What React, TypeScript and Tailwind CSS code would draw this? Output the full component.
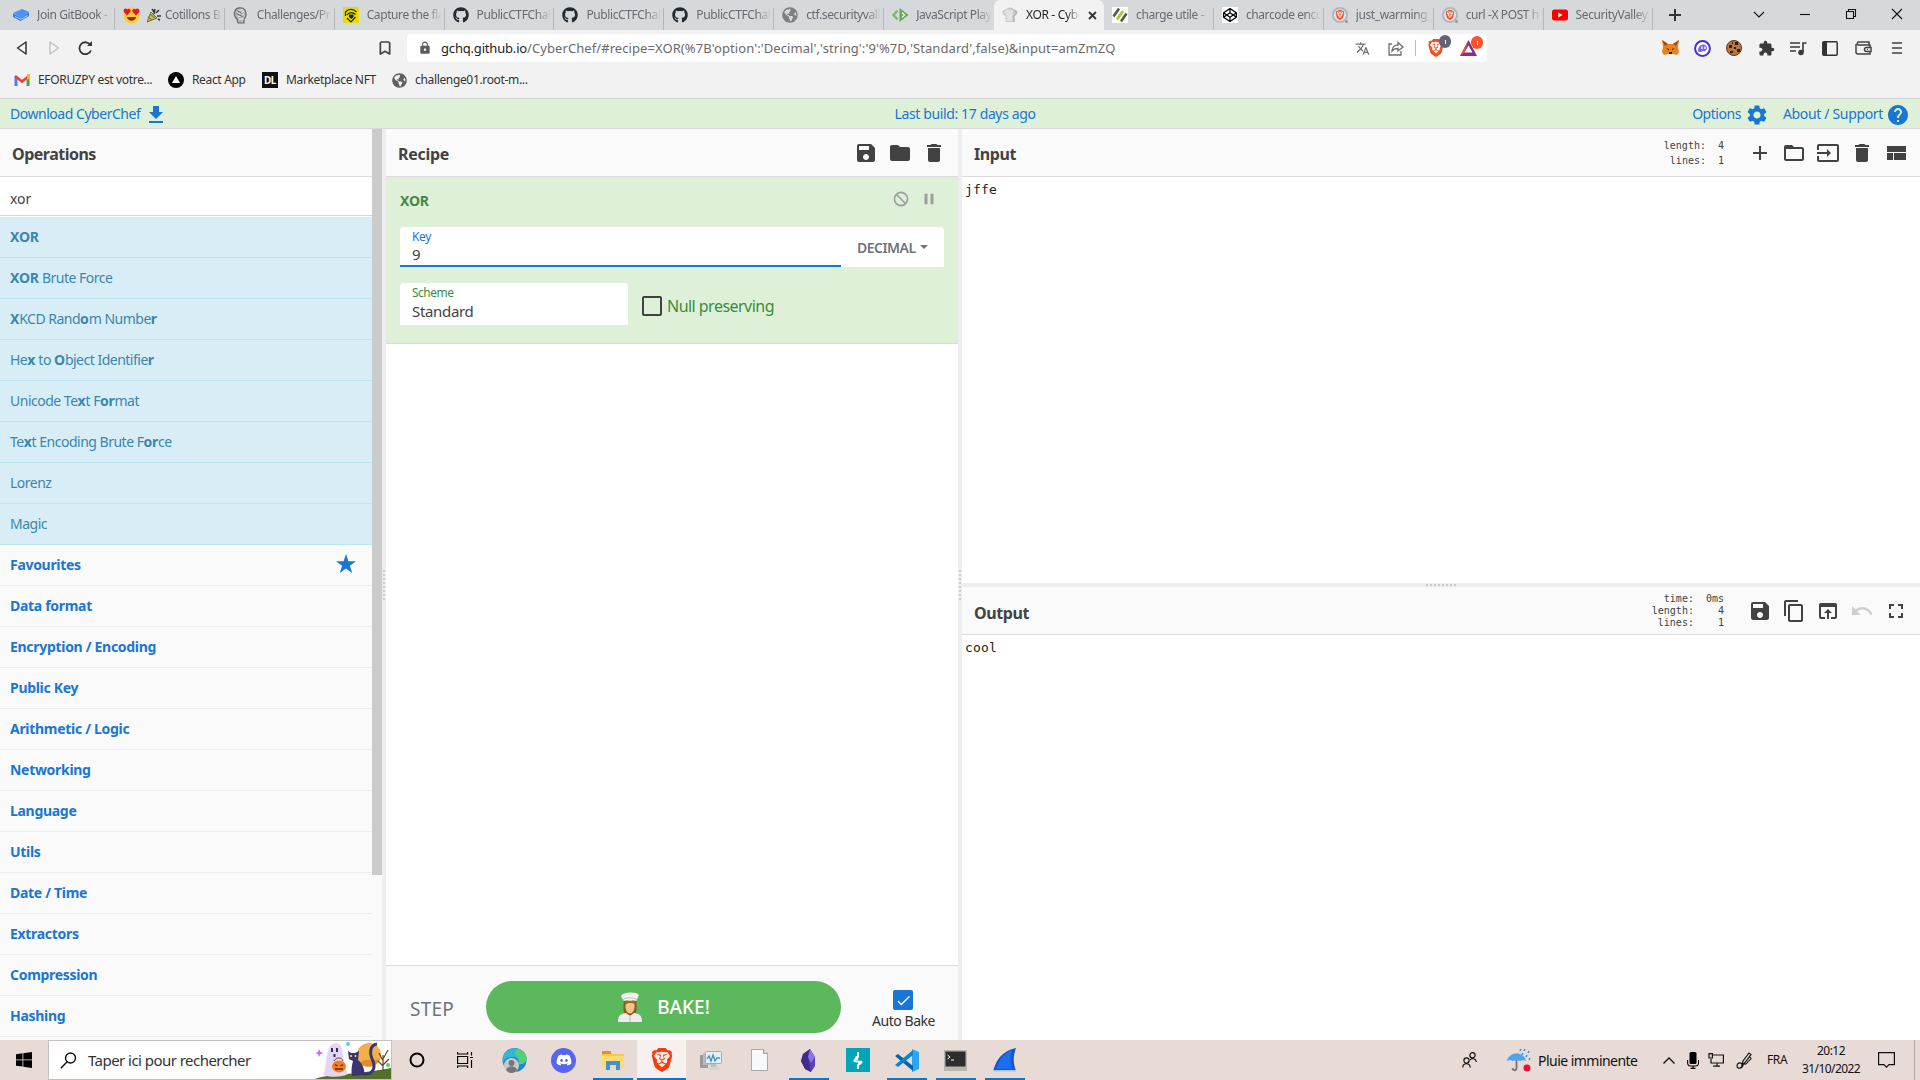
import type { ReactNode } from 'react';
import {
  MdSave, MdFolder, MdDelete, MdAdd, MdFolderOpen, MdInput, MdContentCopy, MdOpenInBrowser, MdUndo, MdFullscreen,
  MdSettings, MdHelp, MdPause, MdTranslate, MdExtension, MdLock, MdCheck,
} from 'react-icons/md';
import { FaGithub, FaDiscord, FaCodepen, FaGlobeAmericas } from 'react-icons/fa';
import { SiBrave } from 'react-icons/si';
import { Bookmark } from 'lucide-react';

const GitBook = () => (
  <svg width="17" height="16" viewBox="0 0 17 16">
    <path d="M0 6l9-4 7.500 3-8.500 5.500z" fill="#4f93f5" />
    <path d="M0 6.500v3.500l7.500 4L16 9V5.500l-8 5z" fill="#2f78ea" />
    <path d="M2 9.500l6 2.700 6.500-3.700" stroke="#dce9fb" strokeWidth=".8" fill="none" />
  </svg>
);
const HeartEyes = () => (
  <svg width="17" height="17" viewBox="0 0 17 17">
    <circle cx="8.500" cy="8.500" r="8" fill="#ffc83d" />
    <path d="M4 8.500L.5 4.500C.5 1 3.500 1 4.300 2.600 5.500.8 8 2 7.600 4.600zM13 8.500l3.500-4C16.500 1 13.500 1 12.700 2.600 11.500.8 9 2 9.400 4.600z" fill="#e8142e" />
    <path d="M4 10h9c-.5 5-8.500 5-9 0z" fill="#7b3b12" />
  </svg>
);
const Popper = () => (
  <svg width="14" height="15" viewBox="0 0 14 15">
    <path d="M0 14L4 4l6 6z" fill="#f5b52a" stroke="#6b4a12" strokeWidth=".8" />
    <path d="M5 1l2 3M9 5l3-3M10 8h4M7 6l1-5M11 11l2 1" stroke="#333" strokeWidth="1.500" />
    <path d="M1 9l4 3M3 6l5 4" stroke="#2f9c8c" strokeWidth="1.200" />
  </svg>
);
const Fist = () => (
  <svg width="15" height="17" viewBox="0 0 15 17" fill="none" stroke="#666">
    <path d="M2 4c1-4 8-4 10-1 2 3 1 8-1 9v4H5l-1-4C1 10 1 6 2 4z" fill="#b4b6b8" strokeWidth="1.200" />
    <path d="M4 5l6-3M4 8l7-4M5 10l6-3M6 12h5" stroke="#eee" />
    <path d="M4 3.500l5 3M3.500 6.500l6 3" strokeWidth="1" />
  </svg>
);
const YellowEye = () => (
  <svg width="16" height="16" viewBox="0 0 16 16">
    <path d="M0 0h16v16H0z" fill="#e4de08" />
    <path d="M2.500 9V5c3-3.500 8-3.500 11 0M4 8c2-3 6-3 8.500-.5M4 11l4 4 4.500-5" fill="none" stroke="#222" strokeWidth="1.200" />
    <path d="M6 7.500h4.500v2.500l-2 2-2.500-2z" fill="#222" />
  </svg>
);
const JsPlay = () => (
  <svg width="17" height="16" viewBox="0 0 17 16">
    <path d="M5.500 3.500L1.500 8l4 4.500" fill="none" stroke="#7cba6b" strokeWidth="2.400" />
    <path d="M7.500 1L16.500 8l-9 7z" fill="#6aa955" />
    <path d="M10 5.500l2.500 2.500-2.500 2.500" fill="none" stroke="#eef5ea" strokeWidth="1.300" />
  </svg>
);
const ChefHat = () => (
  <svg width="16" height="16" viewBox="0 0 16 16">
    <path d="M3.500 15V9C-1 7 0 2 4 2.500 6-.5 11 0 12 2.500c4 0 5 5 0 6.500v6z" fill="#c9c9c9" />
    <path d="M3 4c2-2 6-2 8 0l-1 10H4.500V8C2 7 1.500 5 3 4z" fill="#e2e2e2" />
    <path d="M12 3c3 1 3 4 0 6v6" fill="none" stroke="#a3a3a3" />
  </svg>
);
const Slashes = () => (
  <svg width="16" height="16" viewBox="0 0 16 16">
    <path d="M0 0h16v16H0z" fill="#fff" />
    <path d="M1.500 9.500L7 1.500M9 14.500l5.500-8" stroke="#555" strokeWidth="2.600" />
    <path d="M5 12.500L11 4" stroke="#9fcc1e" strokeWidth="2.600" />
  </svg>
);
const BraveRing = () => (
  <span className="relative flex size-4 items-center justify-center rounded-full border-2 border-[#b4b7b9] bg-[#e3e4e5]">
    <SiBrave className="size-[10px] text-[#f0502c]" />
    <span className="absolute -right-[2px] -bottom-[2px] size-[3px] rounded-full bg-[#999]" />
  </span>
);
const YouTube = () => (
  <svg width="16" height="16" viewBox="0 0 16 16">
    <rect y="2.500" width="16" height="11" rx="2.500" fill="#f00" />
    <path d="M6.300 5.500v5L10.500 8z" fill="#fff" />
  </svg>
);

type Tab = { icon: ReactNode; text: string; pre?: ReactNode; active?: boolean };
const gh = <FaGithub className="size-4 text-[#24292e]" />;
const tabs: Tab[] = [
  { icon: <GitBook />, text: 'Join GitBook -' },
  { icon: <HeartEyes />, text: 'Cotillons Ba', pre: <Popper /> },
  { icon: <Fist />, text: 'Challenges/Pr' },
  { icon: <YellowEye />, text: 'Capture the fla' },
  { icon: gh, text: 'PublicCTFChal' },
  { icon: gh, text: 'PublicCTFChal' },
  { icon: gh, text: 'PublicCTFChal' },
  { icon: <FaGlobeAmericas className="size-4 text-[#7d8083]" />, text: 'ctf.securityvalle' },
  { icon: <JsPlay />, text: 'JavaScript Play' },
  { icon: <ChefHat />, text: 'XOR - Cyber', active: true },
  { icon: <Slashes />, text: 'charge utile -' },
  { icon: <span className="flex size-4 items-center justify-center bg-white"><FaCodepen className="size-[14px] text-black" /></span>, text: 'charcode enco' },
  { icon: <BraveRing />, text: 'just_warming_' },
  { icon: <BraveRing />, text: 'curl -X POST h' },
  { icon: <YouTube />, text: 'SecurityValley' },
];

function TabStrip() {
  return (
    <div className="flex h-[30px] bg-[#d5d9dc] pl-[5px]">
      {tabs.map((t, i) => (
        <div
          key={i}
          className={
            t.active
              ? 'flex h-[30px] w-[110px] shrink-0 items-center rounded-t-md bg-[#f2f2f2] pl-2 text-[#222]'
              : 'flex h-[30px] w-[109.900px] shrink-0 items-center pl-2 text-[#676b6f]'
          }
        >
          <span className="flex w-[24px] shrink-0 items-center">{t.icon}</span>
          {t.pre && <span className="mr-1 shrink-0">{t.pre}</span>}
          <span
            className={
              t.active
                ? 'w-[54px] overflow-hidden text-[12px] tracking-[-0.350px] whitespace-nowrap [mask-image:linear-gradient(to_right,black_75%,transparent)]'
                : 'flex-1 overflow-hidden text-[12px] tracking-[-0.400px] whitespace-nowrap [mask-image:linear-gradient(to_right,black_80%,transparent)]'
            }
          >
            {t.text}
          </span>
          {t.active ? (
            <svg width="9" height="9" viewBox="0 0 9 9" className="ml-[8px]"><path d="M1 1l7 7M8 1L1 8" stroke="#333" strokeWidth="1.800" /></svg>
          ) : (
            <span className={i === 8 ? 'h-4 w-[2px]' : 'mt-2 ml-[2px] h-[23px] w-px bg-[#b3b7ba]'} />
          )}
        </div>
      ))}
      <div className="flex w-[44px] items-center justify-center">
        <svg width="12" height="12" viewBox="0 0 12 12"><path d="M6 0v12M0 6h12" stroke="#333" strokeWidth="2" /></svg>
      </div>
      <div className="ml-auto flex">
        <WinBtn><path d="M1 4l5 5 5-5" /></WinBtn>
        <WinBtn><path d="M1 6.500h10" /></WinBtn>
        <WinBtn><path d="M1.500 3.500h7v7h-7zM3.500 3.500v-2h7v7h-2" /></WinBtn>
        <WinBtn><path d="M1 1l10 10M11 1L1 11" /></WinBtn>
      </div>
    </div>
  );
}
const WinBtn = ({ children }: { children: ReactNode }) => (
  <div className="flex h-[28px] w-[46px] items-center justify-center">
    <svg width="12" height="12" viewBox="0 0 12 12" fill="none" stroke="#111" strokeWidth="1.100">{children}</svg>
  </div>
);

const Fox = () => (
  <svg width="17" height="16" viewBox="0 0 17 16">
    <path d="M0 0l6 4h5l6-4-1 7 1 5-2 3-4-1H6l-4 1-2-3 1-5z" fill="#e8821e" />
    <path d="M0 0l6 4-3 2zM17 0l-6 4 3 2z" fill="#9a4a15" />
    <path d="M4 8l3 1v1.500zM13 8l-3 1v1.500zM7 12h3v2H7z" fill="#2b2522" />
  </svg>
);
const Phantom = () => (
  <svg width="17" height="17" viewBox="0 0 17 17">
    <circle cx="8.500" cy="8.500" r="7.400" fill="#fff" stroke="#4a2fd0" strokeWidth="2" />
    <path d="M4 10.500c0-7 9-8 9-2.500 0 2.500-2 3.500-4 3-2 1.500-5 1.500-5-.5z" fill="#7a62ee" />
    <path d="M8 6.500V9M11 6.500V9" stroke="#fff" strokeWidth="1.300" />
  </svg>
);
const Cookie = () => (
  <svg width="16" height="16" viewBox="0 0 16 16">
    <circle cx="8" cy="8" r="7.500" fill="#b9773f" stroke="#5b351c" />
    <path d="M3 5h3v3H3zM9 2h3v3H9zM8 7h2v2H8zM4 11h3v2H4zM11 9h3v3h-3zM6 2h1v2H6z" fill="#2e1d14" />
  </svg>
);
const Badge = ({ color }: { color: 'gray' | 'red' }) => (
  <span className={color === 'gray' ? 'absolute -top-[4px] -right-[6px] flex h-[13px] w-3 items-center justify-center rounded-full bg-[#5f6375]' : 'absolute -top-[4px] -right-[6px] flex h-[13px] w-3 items-center justify-center rounded-full bg-[#fb542b]'}>
    <span className="h-1 w-px bg-white" />
  </span>
);

function Toolbar() {
  return (
    <div className="flex h-[36px] items-center bg-[#f2f2f2]">
      <div className="ml-[6px] flex">
        <span className="flex w-8 justify-center"><svg width="12" height="14" viewBox="0 0 12 14"><path d="M10 1v12L1.500 7z" fill="none" stroke="#333" strokeWidth="1.500" strokeLinejoin="round" /></svg></span>
        <span className="flex w-8 justify-center"><svg width="12" height="14" viewBox="0 0 12 14"><path d="M2 1v12l8.500-6z" fill="none" stroke="#c2c2c2" strokeWidth="1.500" strokeLinejoin="round" /></svg></span>
        <span className="flex w-8 justify-center"><svg width="16" height="14" viewBox="0 0 16 14"><path d="M13 9.500A6 6 0 1 1 12.500 4" fill="none" stroke="#333" strokeWidth="1.800" /><path d="M14 0v5H9z" fill="#333" /></svg></span>
      </div>
      <Bookmark className="ml-[275px] h-4 w-4 text-[#444]" strokeWidth={2.600} />
      <div className="ml-[14px] flex h-[28px] w-[1080px] items-center rounded bg-white">
        <MdLock className="ml-[11px] size-[14px] text-[#5a5d61]" />
        <span className="ml-[9px] pt-px text-[13px] tracking-[-0.180px] text-[#222]">gchq.github.io</span>
        <span className="pt-px text-[13px] tracking-[0.080px] whitespace-nowrap text-[#6a6a6a]">{"/CyberChef/#recipe=XOR(%7B'option':'Decimal','string':'9'%7D,'Standard',false)&input=amZmZQ"}</span>
        <div className="ml-auto flex items-center pr-[10px]">
          <MdTranslate className="size-[15px] text-[#6d6d6d]" />
          <svg className="ml-[18px]" width="16" height="15" viewBox="0 0 16 15" fill="none" stroke="#6d6d6d" strokeWidth="1.300"><path d="M4 3H1v11h12v-4M4 10c0-4 3-6 6-6V1.500L15 6l-5 4V7.500C7 7.500 5.500 8 4 10z" /></svg>
          <span className="ml-[11px] h-4 w-px bg-[#bbb]" />
          <span className="relative ml-[11px]"><SiBrave className="size-[18px] text-[#f2501e]" /><Badge color="gray" /></span>
          <span className="relative ml-[15px]">
            <svg width="17" height="16" viewBox="0 0 17 16"><path d="M8.500 0l8.500 16H0z" fill="#8b2c84" /><path d="M8.500 0L0 16l5-4z" fill="#f4512a" /><path d="M8.500 5.500l4 7h-8z" fill="#fff" /></svg>
            <Badge color="red" />
          </span>
        </div>
      </div>
      <div className="ml-[167px] flex items-center">
        <span className="flex w-8 justify-center"><Fox /></span>
        <span className="flex w-8 justify-center"><Phantom /></span>
        <span className="flex w-8 justify-center"><Cookie /></span>
        <span className="flex w-8 justify-center"><MdExtension className="size-[17px] text-[#3a3a3a]" /></span>
        <span className="flex w-8 justify-center"><svg width="17" height="15" viewBox="0 0 17 15" fill="none" stroke="#3a3a3a" strokeWidth="1.600"><path d="M0 2h10M0 6h10M0 10h6M16.500 2H13v9" /><circle cx="11" cy="11.500" r="2" fill="#3a3a3a" /></svg></span>
        <span className="flex w-8 justify-center"><svg width="16" height="15" viewBox="0 0 16 15"><rect x=".8" y=".8" width="14.400" height="13.400" rx="1" fill="none" stroke="#333" strokeWidth="1.500" /><path d="M1 1h4v13H1z" fill="#333" /></svg></span>
        <span className="flex w-[35px] justify-center"><svg width="17" height="14" viewBox="0 0 17 14" fill="none" stroke="#444" strokeWidth="1.500"><path d="M14 4V1H3a2 2 0 0 0 0 3h12v9H3a2 2 0 0 1-2-2V3" /><path d="M16 6.500h-4.500a2 2 0 0 0 0 4H16z" fill="#f2f2f2" /><path d="M12 8.500h1" /></svg></span>
        <span className="flex w-8 justify-center"><svg width="10" height="12" viewBox="0 0 10 12"><path d="M0 1h10M0 6h10M0 11h10" stroke="#444" strokeWidth="1.600" /></svg></span>
      </div>
    </div>
  );
}

function Bookmarks() {
  return (
    <div className="flex h-[33px] items-center border-b border-[#d3d3d3] bg-[#f2f2f2] pb-[4px] text-[12px] tracking-[-0.340px] text-[#333]">
      <div className="ml-[14px] flex w-[154px] items-center">
        <svg width="16" height="12" viewBox="0 0 16 12" className="mr-2"><path d="M2 12V2.500" stroke="#4285f4" strokeWidth="3" /><path d="M14 12V2.500" stroke="#34a853" strokeWidth="3" /><path d="M1 2l7 5.500L15 2" fill="none" stroke="#ea4335" strokeWidth="2.800" /><path d="M13 0h3v4l-3 2z" fill="#fbbc04" /></svg>
        EFORUZPY est votre...
      </div>
      <div className="flex w-[94px] items-center">
        <svg width="16" height="16" viewBox="0 0 16 16" className="mr-2"><circle cx="8" cy="8" r="8" fill="#000" /><path d="M8 4l4 7H4z" fill="#fff" /></svg>
        React App
      </div>
      <div className="flex w-[130px] items-center">
        <span className="mr-2 flex size-4 items-center justify-center bg-[#111] text-[10px] font-bold tracking-[-0.500px] text-white">DL</span>
        Marketplace NFT
      </div>
      <FaGlobeAmericas className="mr-2 size-[15px] text-[#5c5f62]" />
      challenge01.root-m...
    </div>
  );
}

function Banner() {
  return (
    <div className="flex h-[30px] items-center border-b border-[#d9d9d9] bg-[#dff0d8] text-[14px] tracking-[-0.470px] text-[#1976d2]">
      <div className="flex flex-1 items-center pl-[10px]">
        Download CyberChef
        <svg width="14" height="17" viewBox="0 0 14 17" className="mt-[2px] ml-[9px]"><path d="M4 0h6v6h4l-7 7-7-7h4zM0 15h14v2H0z" fill="#1976d2" /></svg>
      </div>
      <span className="mr-[-5px] ml-[5px] tracking-[-0.370px]">Last build: 17 days ago</span>
      <div className="flex flex-1 items-center justify-end pr-[10px]">
        Options
        <MdSettings className="mt-[2px] ml-[4px] size-6" />
        <span className="ml-[14px] tracking-[-0.330px]">About / Support</span>
        <MdHelp className="mt-[2px] ml-[3px] size-6" />
      </div>
    </div>
  );
}

const operations: ReactNode[] = [
  <b>XOR</b>,
  <><b>XOR</b> Brute Force</>,
  <><b>X</b>KCD Rand<b>o</b>m Numbe<b>r</b></>,
  <>He<b>x</b> to <b>O</b>bject Identifie<b>r</b></>,
  <>Unicode Te<b>x</b>t F<b>or</b>mat</>,
  <>Te<b>x</b>t Encoding Brute F<b>or</b>ce</>,
  'Lorenz',
  'Magic',
];
const categories = ['Favourites', 'Data format', 'Encryption / Encoding', 'Public Key', 'Arithmetic / Logic', 'Networking', 'Language', 'Utils', 'Date / Time', 'Extractors', 'Compression', 'Hashing'];

function Operations() {
  return (
    <div className="flex w-[382px] shrink-0 bg-[#fafafa]">
      <div className="flex w-[372px] flex-col overflow-hidden">
        <div className="flex h-[48px] shrink-0 items-center border-b border-[#dcdcdc] pt-[3px] pl-3 text-[16px] font-bold tracking-[-0.500px] text-[#424242]">Operations</div>
        <div className="flex h-[39px] shrink-0 items-center border-b border-[#d4d4d4] bg-white pt-[5px] pl-[10px] text-[14px] tracking-[-0.100px] text-[#424242]">xor</div>
        <div className="h-px shrink-0 bg-white" />
        {operations.map((o, i) => (
          <div key={i} className="flex h-[41px] shrink-0 items-center border-b border-[#bce8f1] bg-[#d9edf7] pb-px pl-[10px] text-[14px] tracking-[-0.500px] text-[#3a87ad] [&_b]:tracking-[-0.200px]">
            <span>{o}</span>
          </div>
        ))}
        {categories.map((c, i) => (
          <div key={i} className="flex h-[41px] shrink-0 items-center border-b border-[#eeeeee] pb-px pl-[10px] text-[14px] font-bold tracking-[-0.300px] text-[#1976d2]">
            <span>{c}</span>
            {i === 0 && <svg width="20" height="19" viewBox="0 0 20 19" className="mr-[16px] mb-[2px] ml-auto"><path d="M10 0l2.400 7.200H20l-6.100 4.500L16.200 19 10 14.500 3.800 19l2.300-7.300L0 7.200h7.600z" fill="#1976d2" /></svg>}
          </div>
        ))}
      </div>
      <div className="h-[746px] w-[10px] bg-[#cbcbcb]" />
    </div>
  );
}

const Grip = ({ horizontal }: { horizontal?: boolean }) => (
  <div className={horizontal ? 'flex h-1 shrink-0 items-center justify-center gap-[2px] bg-[#eee]' : 'flex w-1 shrink-0 flex-col items-center justify-center gap-[2px] bg-[#eee]'}>
    {[0, 1, 2, 3, 4, 5, 6, 7].map((n) => <span key={n} className="size-[2px] bg-[#ccc]" />)}
  </div>
);

const IconRow = ({ children }: { children: ReactNode }) => (
  <div className="flex items-center text-[24px] text-[#424242] [&>*]:flex [&>*]:w-[34px] [&>*]:justify-center">{children}</div>
);

function Recipe() {
  return (
    <div className="flex w-[572px] shrink-0 flex-col bg-white">
      <div className="flex h-[48px] items-center border-b border-[#dcdcdc] bg-[#fafafa] pl-3">
        <span className="pt-[3px] text-[16px] font-bold tracking-[-0.300px] text-[#424242]">Recipe</span>
        <div className="ml-auto pr-[7px]"><IconRow><span><MdSave /></span><span><MdFolder /></span><span><MdDelete /></span></IconRow></div>
      </div>
      <div className="h-[167px] border-b border-[#cde5c0] bg-[#dff0d8] px-[14px]">
        <div className="flex h-[50px] items-center">
          <span className="mb-[4px] text-[14px] font-bold tracking-[-0.200px] text-[#468847]">XOR</span>
          <svg className="mt-[-6px] ml-auto" width="16" height="16" viewBox="0 0 16 16" fill="none" stroke="#9e9e9e" strokeWidth="1.600"><circle cx="8" cy="8" r="6.600" /><path d="M3.500 3.500l9 9" /></svg>
          <MdPause className="mt-[-6px] mr-[6px] ml-[11px] size-[18px] text-[#9e9e9e]" />
        </div>
        <div className="flex h-10 rounded-t bg-white">
          <div className="flex w-[441px] flex-col border-b-2 border-[#1976d2] pl-3">
            <span className="mt-[2px] text-[12px] leading-4 tracking-[-0.330px] text-[#1976d2]">Key</span>
            <span className="text-[15px] leading-[19px] text-[#424242]">9</span>
          </div>
          <div className="flex flex-1 items-center pt-px pl-4 text-[14px] font-semibold tracking-[-0.530px] text-[#6c757d]">
            DECIMAL
            <span className="mb-[2px] ml-1 border-x-4 border-t-4 border-x-transparent border-t-[#6c757d]" />
          </div>
        </div>
        <div className="mt-4 flex">
          <div className="flex h-[42px] w-[228px] flex-col rounded-t bg-white pl-3">
            <span className="mt-[2px] text-[12px] leading-4 tracking-[-0.500px] text-[#388e3c]">Scheme</span>
            <span className="text-[15px] leading-[21px] tracking-[-0.330px] text-[#424242]">Standard</span>
          </div>
          <span className="mt-[13px] ml-[14px] size-5 rounded-[2px] border-2 border-[#424242]" />
          <span className="mt-[11px] ml-[5px] text-[16px] leading-6 tracking-[-0.530px] text-[#388e3c]">Null preserving</span>
        </div>
      </div>
      <div className="mt-auto flex h-[75px] border-t border-[#dcdcdc] bg-[#fafafa]">
        <span className="mt-[30px] ml-[24px] w-[76px] shrink-0 text-[19px] leading-[26px] tracking-[0.200px] text-[#6c757d]">STEP</span>
        <div className="mt-[15px] flex h-[52px] w-[355px] shrink-0 items-center justify-center rounded-[26px] bg-[#5cb85c] text-[19px] font-medium text-white">
          <svg width="26" height="31" viewBox="0 0 26 31" className="mr-[14px]">
            <path d="M6.500 9h13v9c0 3-2 5-2 5h-9s-2-2-2-5z" fill="#8a5a1c" />
            <ellipse cx="13" cy="14.500" rx="4.600" ry="7" fill="#f0c48a" />
            <path d="M8 9h10v3c-4-1.500-7-1.500-10 1z" fill="#a06a22" />
            <path d="M1 30c0-7 3-8 8-9l4 3 4-3c5 1 8 2 8 9z" fill="#ededed" />
            <path d="M13 24v6" stroke="#bbb" />
            <path d="M6.500 9L4 4C5 0 20-1 22 3l-2.500 6c-4-1.500-9-1.500-13 0z" fill="#f2f2f2" />
            <path d="M6.500 9V7c4-1.500 9-1.500 13 0v2" fill="none" stroke="#c4c4c4" />
          </svg>
          BAKE!
        </div>
        <div className="flex w-[125px] shrink-0 flex-col items-center pt-[24px]">
          <span className="mr-px flex size-5 items-center justify-center rounded-[2px] bg-[#1976d2]"><MdCheck className="size-[17px] text-white" /></span>
          <span className="mt-[1px] text-[14px] leading-[20px] tracking-[-0.450px] text-[#333]">Auto Bake</span>
        </div>
      </div>
    </div>
  );
}

function InputOutput() {
  return (
    <div className="flex min-w-0 flex-1 flex-col bg-white">
      <div className="flex h-[48px] shrink-0 items-center border-b border-[#dcdcdc] bg-[#fafafa] pl-3">
        <span className="pt-[3px] text-[16px] font-bold tracking-[-0.400px] text-[#424242]">Input</span>
        <div className='ml-auto flex gap-[12px] text-right font-["DejaVu_Sans_Mono",monospace] text-[10px] leading-[15px] text-[#424242]'>
          <div>length:<br />lines:</div>
          <div>4<br />1</div>
        </div>
        <div className="ml-[19px] pr-[7px]">
          <IconRow>
            <span><MdAdd /></span><span><MdFolderOpen /></span><span><MdInput /></span><span><MdDelete /></span>
            <span><svg width="24" height="24" viewBox="0 0 24 24" fill="currentColor"><path d="M3 19h6v-7H3v7zm7 0h12v-7H10v7zM3 5v6h19V5H3z" /></svg></span>
          </IconRow>
        </div>
      </div>
      <div className='h-[406px] shrink-0 pt-[4px] pl-[3px] font-["DejaVu_Sans_Mono",monospace] text-[13px] leading-[18px] tracking-[0.170px] text-[#222]'>jffe</div>
      <Grip horizontal />
      <div className="flex h-[48px] shrink-0 items-center border-b border-[#dcdcdc] bg-[#fafafa] pl-3">
        <span className="pt-[4px] text-[16px] font-bold tracking-[-0.400px] text-[#424242]">Output</span>
        <div className='ml-auto flex gap-[12px] text-right font-["DejaVu_Sans_Mono",monospace] text-[10px] leading-[12px] text-[#424242]'>
          <div>time:<br />length:<br />lines:</div>
          <div>0ms<br />4<br />1</div>
        </div>
        <div className="ml-[19px] pr-[7px]">
          <IconRow>
            <span><MdSave /></span><span><MdContentCopy /></span><span><MdOpenInBrowser /></span><span className="text-[#cfcfcf]"><MdUndo /></span><span><MdFullscreen /></span>
          </IconRow>
        </div>
      </div>
      <div className='flex-1 pt-[4px] pl-[3px] font-["DejaVu_Sans_Mono",monospace] text-[13px] leading-[18px] tracking-[0.170px] text-[#222]'>cool</div>
    </div>
  );
}

const Halloween = () => (
  <svg width="76" height="38" viewBox="0 0 76 38">
    <circle cx="54" cy="14" r="12" fill="#f2b04a" />
    <path d="M44 22c6 6 18 4 21-5-2 2-6 3-9 2-4-1-8 0-12 3z" fill="#e08d2c" />
    <path d="M0 38C10 33 40 34 76 27v11z" fill="#55702a" />
    <path d="M8 34c4-8 2-18 6-27 3-7 12-6 13 1 2 9 1 17 6 25-5 3-17 4-25 1z" fill="#e3d6f5" />
    <path d="M17 7v4M22 7v4M19.500 13v3" stroke="#3b2a63" strokeWidth="2" />
    <path d="M19 20c2-4 8-4 9 0" fill="none" stroke="#6b4b2a" />
    <ellipse cx="24" cy="25.500" rx="7" ry="6" fill="#f47b1f" />
    <path d="M20 23.500l2.500 1.500M28 23.500L25.500 25M20 28h8" stroke="#5b2a0a" strokeWidth="1.300" />
    <path d="M37 35c-1-7 0-11 1-15l-4-2-1-8 3 2h4l4-2-1 9c5 4 7 10 6 15z" fill="#3a3570" />
    <circle cx="36" cy="15" r="1" fill="#ffe45c" /><circle cx="40.500" cy="15" r="1" fill="#ffe45c" />
    <path d="M48 33c9 1 13-5 10-13-4-8-3-16 4-17" fill="none" stroke="#3a3570" strokeWidth="3" />
    <path d="M68 30V14M68 20l-4-8M68 18l5-9M68 24l6-6M68 25l-5-5" stroke="#6d4326" strokeWidth="1.200" />
    <path d="M4 8l1.500 3 3 1-3 1L4 16l-1-3-3-1 3-1z" fill="#c66df0" />
    <circle cx="33" cy="3" r="2" fill="#5ccfe6" /><circle cx="73" cy="24" r="2" fill="#4fd36a" />
  </svg>
);

const Task = ({ children, open, active }: { children: ReactNode; open?: boolean; active?: boolean }) => (
  <div className={active ? 'flex h-10 w-[49px] flex-col items-center bg-[#f6f1ef]' : 'flex h-10 w-[49px] flex-col items-center'}>
    <div className="flex h-[38px] items-center pt-[2px]">{children}</div>
    {open && <div className={active ? 'h-[2px] w-full bg-[#0078d7]' : 'h-[2px] w-10 bg-[#0078d7]'} />}
  </div>
);

function Taskbar() {
  return (
    <div className="flex h-10 shrink-0 items-center bg-[#e8dad5] text-[#111]">
      <div className="flex w-[48px] justify-center">
        <svg width="16" height="16" viewBox="0 0 16 16"><path d="M0 2.300l6.500-1v6.200H0zM7.300 1.200L16 0v7.500H7.300zM0 8.300h6.500v6.300L0 13.700zM7.300 8.300H16V16l-8.700-1.200z" fill="#000" /></svg>
      </div>
      <div className="flex h-10 w-[344px] items-center border border-[#c3c0bf] bg-white">
        <svg width="17" height="17" viewBox="0 0 17 17" className="ml-[11px]" fill="none" stroke="#111" strokeWidth="1.400"><circle cx="10.500" cy="6" r="5" /><path d="M7 10L.8 16.200" /></svg>
        <span className="ml-[11px] text-[15px] tracking-[-0.540px] text-[#333]">Taper ici pour rechercher</span>
        <div className="ml-auto self-end"><Halloween /></div>
      </div>
      <Task><svg width="16" height="16" viewBox="0 0 16 16"><circle cx="8" cy="8" r="6.500" fill="none" stroke="#000" strokeWidth="2" /></svg></Task>
      <Task><svg width="17" height="16" viewBox="0 0 17 16" fill="none" stroke="#000" strokeWidth="1.200"><path d="M.6 0v2h10V0M.6 4.500h10v7H.6zM.6 16v-2h10v2M14.500 0v3.500M14.500 8v8M13 5.500h3" /></svg></Task>
      <Task>
        <svg width="25" height="25" viewBox="0 0 25 25">
          <circle cx="12.500" cy="12" r="12" fill="#1d86d0" />
          <path d="M1 9C4-3 22-2 24.500 9c1 5-4 8-8 7 1-4-1-7-6-7s-8 2-9.500 5z" fill="#2fb9d6" />
          <path d="M15 1c6 1 10 6 9.500 10-1 5-6 6-8 5 2-6-1-9-4-10z" fill="#55cf74" />
          <circle cx="9.500" cy="17.500" r="7.500" fill="#c9c9c9" />
          <circle cx="9.500" cy="15" r="3" fill="#777" /><path d="M4 22c1-5 10-5 11 0-3 4-8 4-11 0z" fill="#777" />
        </svg>
      </Task>
      <Task><span className="flex size-[25px] items-center justify-center rounded-full bg-[#5865f2]"><FaDiscord className="size-4 text-white" /></span></Task>
      <Task open>
        <svg width="22" height="20" viewBox="0 0 22 20"><path d="M0 1h8l2 3h12v14H0z" fill="#f7c64b" /><path d="M0 6h22v12H0z" fill="#ffdb72" /><path d="M0 1h9v3H0z" fill="#d79a1c" /><path d="M4 20v-9h14v9h-4v-5H8v5z" fill="#3a94dd" /></svg>
      </Task>
      <Task open active><SiBrave className="size-6 text-[#f83c10]" /></Task>
      <Task>
        <svg width="24" height="21" viewBox="0 0 24 21"><path d="M1 5h8v13H1z" fill="#9a9a9a" /><path d="M4 3h8v12H4z" fill="#bcbcbc" /><rect x="6.500" y="1.500" width="16" height="12" rx="1" fill="#e4f0f8" stroke="#aaa" /><path d="M8 9l2-3 2 5 2-6 2 6 2-3h3" fill="none" stroke="#3e8fc4" strokeWidth="1.300" /><path d="M12 14h5l1 4h-6z" fill="#bbb" /><ellipse cx="15" cy="18.500" rx="6" ry="2" fill="#d3d3d3" /></svg>
      </Task>
      <Task><svg width="17" height="22" viewBox="0 0 17 22"><path d="M.5.5h12l4 4v17H.5z" fill="#f7f9fa" stroke="#aaa" /><path d="M12.500.5v4h4" fill="#ddd" stroke="#999" /></svg></Task>
      <Task open><svg width="15" height="23" viewBox="0 0 15 23"><path d="M9 0l5 8v9l-4 6-6-3-4-8 2-7z" fill="#5a3fb8" /><path d="M9 0L7 8l3 15-6-3-4-8 2-7z" fill="#412a8c" /><path d="M9 0l5 8-4 6-3-6z" fill="#8b74e8" /></svg></Task>
      <Task><span className="flex size-6 items-center justify-center bg-[#00a5bb]"><svg width="10" height="17" viewBox="0 0 10 17"><path d="M5 0v5L1 9l8 1-4 3v4" fill="none" stroke="#fff" strokeWidth="2" strokeLinejoin="bevel" /><path d="M1 8l2-4h2v4zM9 10l-2 3H5v-3z" fill="#fff" /></svg></span></Task>
      <Task open><svg width="24" height="23" viewBox="0 0 24 23"><path d="M17 0l7 3v17l-7 3V0z" fill="#2aa6f2" /><path d="M0 7l3-2 15 12v5z" fill="#0065a9" /><path d="M0 16l3 2L18 6V1z" fill="#0a84d0" /></svg></Task>
      <Task open><svg width="23" height="21" viewBox="0 0 23 21"><path d="M0 0h23v21H0z" fill="#b9b6b0" /><path d="M1.500 1.500h20v15h-20z" fill="#2d2d2d" /><path d="M3.500 5l2.500 2-2.500 2M7 10h3" fill="none" stroke="#fff" /></svg></Task>
      <Task open><svg width="23" height="24" viewBox="0 0 23 24"><path d="M0 23C4 10 10 3 23 0c-3 8-3 15 0 23z" fill="#1458c8" /><path d="M3 21C7 11 11 5 19 2c-2 7-1 13 0 19z" fill="#1c6df0" /><path d="M0 22h23v1.500H0z" fill="#a9c6e8" /></svg></Task>

      <div className="ml-auto flex items-center">
        <svg width="15" height="16" viewBox="0 0 15 16" fill="none" stroke="#111" strokeWidth="1.200"><circle cx="4.500" cy="8.500" r="2.600" /><path d="M.8 15.500c0-5 7-5 7.500 0" /><circle cx="10.500" cy="3.300" r="2.600" /><path d="M8 8c2-2.500 6-1.500 6.300 2" /></svg>
        <svg className="ml-[30px]" width="24" height="24" viewBox="0 0 24 24">
          <path d="M0 13C2 3 17 3 19 13l-3-1-3 1-3.500-1L6 13l-3-1z" fill="#4da3ec" />
          <path d="M9.500 12v8c0 3-4 3-4 0" fill="none" stroke="#777" strokeWidth="1.800" />
          <path d="M14 1l-1 2M18 1l-1 2M22 3l-1 2M16 5l-1 2M20 7l-1 2M23 10l-1 2" stroke="#3a8fe0" strokeWidth="1.500" />
          <circle cx="20" cy="20" r="3.500" fill="#e81332" />
        </svg>
        <span className="ml-[7px] w-[120px] text-[14px] tracking-[-0.530px] whitespace-nowrap">Pluie imminente</span>
        <svg className="ml-[5px]" width="12" height="7" viewBox="0 0 12 7"><path d="M.5 6.500L6 1l5.500 5.500" fill="none" stroke="#111" strokeWidth="1.300" /></svg>
        <span className="ml-[8px] flex w-[19px] justify-center"><svg width="12" height="17" viewBox="0 0 12 17"><rect x="2.500" width="7" height="12" rx="1.500" fill="#000" /><path d="M.6 8v2.500c0 3 1.500 3.500 3 3.500h5c1.500 0 3-.5 3-3.500V8M6 14v2.400M3.500 16.400h5" fill="none" stroke="#000" strokeWidth="1.100" /></svg></span>
        <svg className="ml-[6px]" width="16" height="14" viewBox="0 0 16 14" fill="none" stroke="#111" strokeWidth="1.200"><path d="M5 2h10.400v8H3V6M1 .6h3.400V5H1zM9 10v3M5 13.200h7" /></svg>
        <svg className="ml-[12px]" width="17" height="17" viewBox="0 0 17 17" fill="none" stroke="#111" strokeWidth="1.200"><path d="M6 13l1-4 6-8 2 1.500-6 8zM13.500 5c4 2-1 3-2.500 6-2 3-3-1-4 2-1 4-6 4-6 1 0-3 3-4 5-2" /></svg>
        <span className="ml-[14px] w-[22px] text-[12px] tracking-[-0.400px]">FRA</span>
        <div className="ml-[11px] flex w-[62px] flex-col items-center text-[12px] leading-[18px] tracking-[-0.560px]"><span>20:12</span><span>31/10/2022</span></div>
        <svg className="ml-[16px]" width="17" height="16" viewBox="0 0 17 16"><path d="M.6.6h15.800v12H11l-2.500 2.500L6 12.600H.6z" fill="none" stroke="#111" strokeWidth="1.200" /></svg>
        <span className="mr-[5px] ml-[19px] h-10 w-px bg-[#b5aaa6]" />
      </div>
    </div>
  );
}

export default function App() {
  return (
    <div className='flex h-[1080px] w-[1920px] flex-col overflow-hidden bg-white font-["Noto_Sans",sans-serif]'>
      <TabStrip />
      <Toolbar />
      <Bookmarks />
      <Banner />
      <div className="flex min-h-0 flex-1">
        <Operations />
        <Grip />
        <Recipe />
        <Grip />
        <InputOutput />
      </div>
      <Taskbar />
    </div>
  );
}
